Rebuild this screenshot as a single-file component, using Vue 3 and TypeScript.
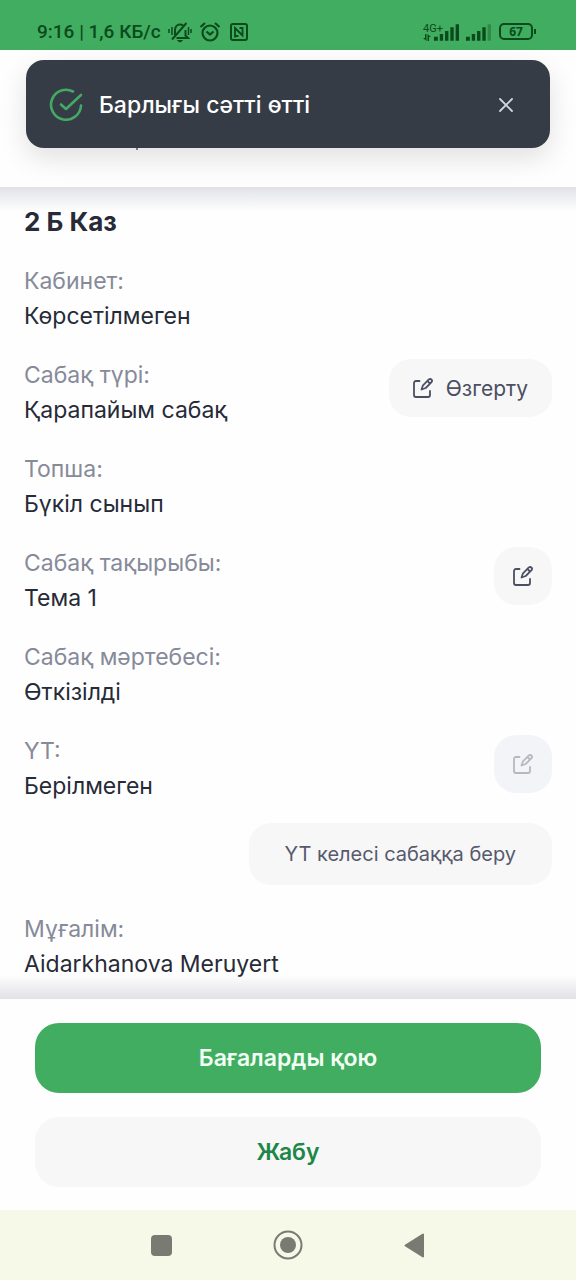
<script setup lang="ts">
import { ref } from 'vue'

interface Field {
  label: string
  value: string
  action?: 'change' | 'edit' | 'locked'
  extra?: string
}

const fields: Field[] = [
  { label: 'Кабинет:', value: 'Көрсетілмеген' },
  { label: 'Сабақ түрі:', value: 'Қарапайым сабақ', action: 'change' },
  { label: 'Топша:', value: 'Бүкіл сынып' },
  { label: 'Сабақ тақырыбы:', value: 'Тема 1', action: 'edit' },
  { label: 'Сабақ мәртебесі:', value: 'Өткізілді' },
  { label: 'ҮТ:', value: 'Берілмеген', action: 'locked', extra: 'ҮТ келесі сабаққа беру' },
  { label: 'Мұғалім:', value: 'Aidarkhanova Meruyert' },
]

const toastOpen = ref(true)
</script>

<template>
  <div class="screen">
    <div class="status">
      <span class="clock">9:16 | 1,6 КБ/с</span>
      <svg class="bell" viewBox="0 0 24 22" fill="none" stroke="currentColor" stroke-width="2">
        <path d="M7 14V9.500C7 6 9 3.500 12 3.500c1.300 0 2.400.4 3.200 1.200M17.500 9v5.500l2.500 2.500H8.500M4 18.500 18.500 2" />
        <path d="M1 8v4M4 6v8M20.500 6v8M23 8v4" stroke-width="1.500" />
        <path d="M9.500 19.500h5l-2.500 1.500z" fill="currentColor" stroke-width="1" />
      </svg>
      <svg class="alarm" viewBox="0 0 22 22" fill="none" stroke="currentColor" stroke-width="2.200">
        <circle cx="11" cy="12" r="7.500" />
        <path d="M1.500 6 6 2M20.500 6 16 2M7.500 10.500l3.500 3 3.500-3" />
      </svg>
      <svg class="nfc" viewBox="0 0 20 20" fill="none" stroke="currentColor" stroke-width="2">
        <rect x="2" y="2" width="16" height="16" rx="2" />
        <path d="M6 15.500V6l7.500 7.500V6H10.500M6 14h3.500" stroke-width="1.800" />
      </svg>
      <span class="spacer"></span>
      <span class="network">
        <span class="generation">4G+</span>
        <svg class="arrows" viewBox="0 0 8 7" fill="currentColor">
          <path d="M2 0h1.500v7L0 4h2zM4.500 7V0L8 3H6v4z" />
        </svg>
      </span>
      <svg class="bars" viewBox="0 0 26 18" fill="currentColor">
        <path d="M0 14h4v4H0zM6 11h3.500v7H6zM11.500 8H15v10h-3.500zM17 4h3.500v14H17zM22.500 1H26v17h-3.500z" />
      </svg>
      <svg class="bars second" viewBox="0 0 26 18" fill="currentColor">
        <path d="M0 14h4v4H0zM6 11h3.500v7H6zM11.500 8H15v10h-3.500zM17 4h3.500v14H17z" />
        <path d="M22.500 1H26v17h-3.500z" opacity=".35" />
      </svg>
      <span class="battery">67</span>
    </div>

    <header class="top"></header>

    <div v-if="toastOpen" class="toast" role="status">
      <svg class="success" viewBox="0 0 36 36" fill="none" stroke="#43a965" stroke-width="2.600" stroke-linecap="round" stroke-linejoin="round">
        <path d="M24 4.500A15 15 0 1 0 32 18.500" />
        <path d="m12 17.500 5 4.500L32 8" />
      </svg>
      <span class="message">Барлығы сәтті өтті</span>
      <button class="close" type="button" aria-label="Жабу" @click="toastOpen = false">
        <svg viewBox="0 0 16 16" fill="none" stroke="currentColor" stroke-width="1.800" stroke-linecap="round">
          <path d="m2 2 12 12M14 2 2 14" />
        </svg>
      </button>
    </div>

    <main class="content">
      <h1>2 Б Каз</h1>
      <dl>
        <div v-for="field in fields" :key="field.label" class="field">
          <div class="row">
            <div class="text">
              <dt>{{ field.label }}</dt>
              <dd>{{ field.value }}</dd>
            </div>
            <button
              v-if="field.action"
              type="button"
              :class="['edit', field.action]"
              :disabled="field.action === 'locked'"
              :aria-label="field.action === 'change' ? undefined : field.label"
            >
              <svg viewBox="0 0 20 20" fill="none" stroke="currentColor" stroke-width="1.800" stroke-linecap="round" stroke-linejoin="round">
                <path d="M6.500 3H3C1.800 3 1 3.800 1 5v12c0 1.200.8 2 2 2h12c1.200 0 2-.8 2-2v-4" />
                <path d="M8.500 11.500 10 7.300l5.600-5.600c1-.9 2-.9 2.800-.2.800.8.800 1.900-.1 2.800L12.700 10zM14.600 3.200l2.300 2.300" />
              </svg>
              <span v-if="field.action === 'change'">Өзгерту</span>
            </button>
          </div>
          <button v-if="field.extra" class="assign" type="button">{{ field.extra }}</button>
        </div>
      </dl>
    </main>

    <footer class="actions">
      <button class="primary" type="button">Бағаларды қою</button>
      <button class="secondary" type="button">Жабу</button>
    </footer>

    <nav class="system">
      <button type="button" aria-label="Recent">
        <svg viewBox="0 0 32 32"><rect x="6" y="6" width="21" height="21" rx="4" fill="currentColor" /></svg>
      </button>
      <button type="button" aria-label="Home">
        <svg viewBox="0 0 32 32">
          <circle cx="16" cy="16" r="13.500" fill="none" stroke="currentColor" stroke-width="2" />
          <circle cx="16" cy="16" r="8" fill="currentColor" />
        </svg>
      </button>
      <button type="button" aria-label="Back">
        <svg viewBox="0 0 32 32"><path d="M6.500 16.500 24 5.500v22z" fill="currentColor" stroke="currentColor" stroke-width="2" stroke-linejoin="round" /></svg>
      </button>
    </nav>
  </div>
</template>

<style>
body {
  margin: 0;
  background: #fefefe;
}
</style>

<style scoped>
* {
  box-sizing: border-box;
}

.screen {
  position: relative;
  display: flex;
  flex-direction: column;
  min-height: 100vh;
  background: #fefefe;
  color: #272a37;
  font-family: Inter, "Noto Sans", sans-serif;
  font-size: 23px;
}

button {
  border: 0;
  padding: 0;
  font: inherit;
  color: inherit;
  background: none;
}

svg {
  display: block;
  flex: none;
}

.status {
  display: flex;
  align-items: center;
  height: 50px;
  padding: 13px 43px 0 37px;
  background: #40ad61;
  color: #0c4a1b;
  font-family: Roboto, "Noto Sans", sans-serif;
}

.clock {
  font-size: 19px;
  font-weight: 500;
  white-space: nowrap;
}

.bell {
  width: 24px;
  height: 22px;
  margin-left: 7px;
}

.alarm {
  width: 22px;
  height: 22px;
  margin-left: 7px;
}

.nfc {
  width: 20px;
  height: 20px;
  margin-left: 8px;
}

.spacer {
  flex: 1;
}

.network {
  display: flex;
  flex-direction: column;
  width: 11px;
}

.generation {
  font-size: 11px;
  line-height: 11px;
}

.arrows {
  width: 8px;
  height: 7px;
}

.bars {
  width: 25px;
  height: 18px;
}

.second {
  margin-left: 7px;
}

.battery {
  position: relative;
  width: 34px;
  height: 17px;
  margin-left: 8px;
  border: 2px solid currentColor;
  border-radius: 5px;
  font-family: "Open Sans", sans-serif;
  font-size: 12px;
  font-weight: 700;
  line-height: 13px;
  text-align: center;
}

.battery::after {
  content: "";
  position: absolute;
  top: 4px;
  right: -5px;
  width: 2px;
  height: 5px;
  background: currentColor;
}

.top {
  height: 137px;
}

.toast {
  position: absolute;
  top: 60px;
  left: 26px;
  right: 26px;
  display: flex;
  align-items: center;
  height: 88px;
  padding: 1px 32px 0 23px;
  border-radius: 18px;
  background: #363c46;
  color: #fff;
  box-shadow: 0 10px 28px rgba(0, 0, 0, 0.12);
}

/* Tail of the page title showing under the toast */
.toast::after {
  content: "";
  position: absolute;
  top: 88px;
  left: 110px;
  width: 2px;
  height: 2px;
  background: #777a82;
}

.success {
  width: 36px;
  height: 36px;
}

.message {
  flex: 1;
  margin-left: 14px;
  font-weight: 500;
}

.close {
  padding: 4px;
  color: #d3d6de;
}

.close svg {
  width: 16px;
  height: 16px;
}

.content {
  flex: 1;
  padding: 17px 24px;
  background:
    linear-gradient(#e1e2e8, #fefefe) top / 100% 24px no-repeat,
    linear-gradient(#fefefe, #e1e1e7) bottom / 100% 24px no-repeat;
}

h1 {
  margin: 0 0 25px;
  font-size: 26px;
  font-weight: 700;
  line-height: 35px;
}

dl {
  display: flex;
  flex-direction: column;
  gap: 24px;
  margin: 0;
}

.field {
  display: flex;
  flex-direction: column;
}

.row {
  display: flex;
  align-items: flex-start;
  justify-content: space-between;
}

dt,
dd {
  margin: 0;
  line-height: 35px;
}

dt {
  color: #868a99;
}

.edit {
  display: flex;
  align-items: center;
  justify-content: center;
  gap: 13px;
  width: 58px;
  height: 58px;
  margin-top: 1px;
  border-radius: 22px;
  background: #f7f7f8;
  color: #4b4f61;
  font-size: 21px;
}

.edit svg {
  width: 20px;
  height: 20px;
}

.change {
  width: auto;
  padding: 0 24px;
}

.locked {
  background: #f2f4f7;
  color: #b4b8c2;
}

.assign {
  align-self: flex-end;
  height: 62px;
  margin: 19px 0 3px;
  padding: 0 36px;
  border-radius: 22px;
  background: #f7f7f8;
  color: #565a6d;
  font-size: 20px;
}

.actions {
  display: flex;
  flex-direction: column;
  gap: 24px;
  padding: 24px 35px 23px;
}

.primary,
.secondary {
  height: 70px;
  border-radius: 24px;
  font-weight: 600;
}

.primary {
  background: #40ad61;
  color: #f2fff4;
}

.secondary {
  background: #f7f7f7;
  color: #1c8748;
}

.system {
  display: grid;
  grid-template-columns: repeat(3, 22%);
  justify-content: center;
  height: 70px;
  background: #f7f9e8;
  color: #797b73;
}

.system button {
  display: flex;
  align-items: center;
  justify-content: center;
}

.system svg {
  width: 32px;
  height: 32px;
}
</style>
